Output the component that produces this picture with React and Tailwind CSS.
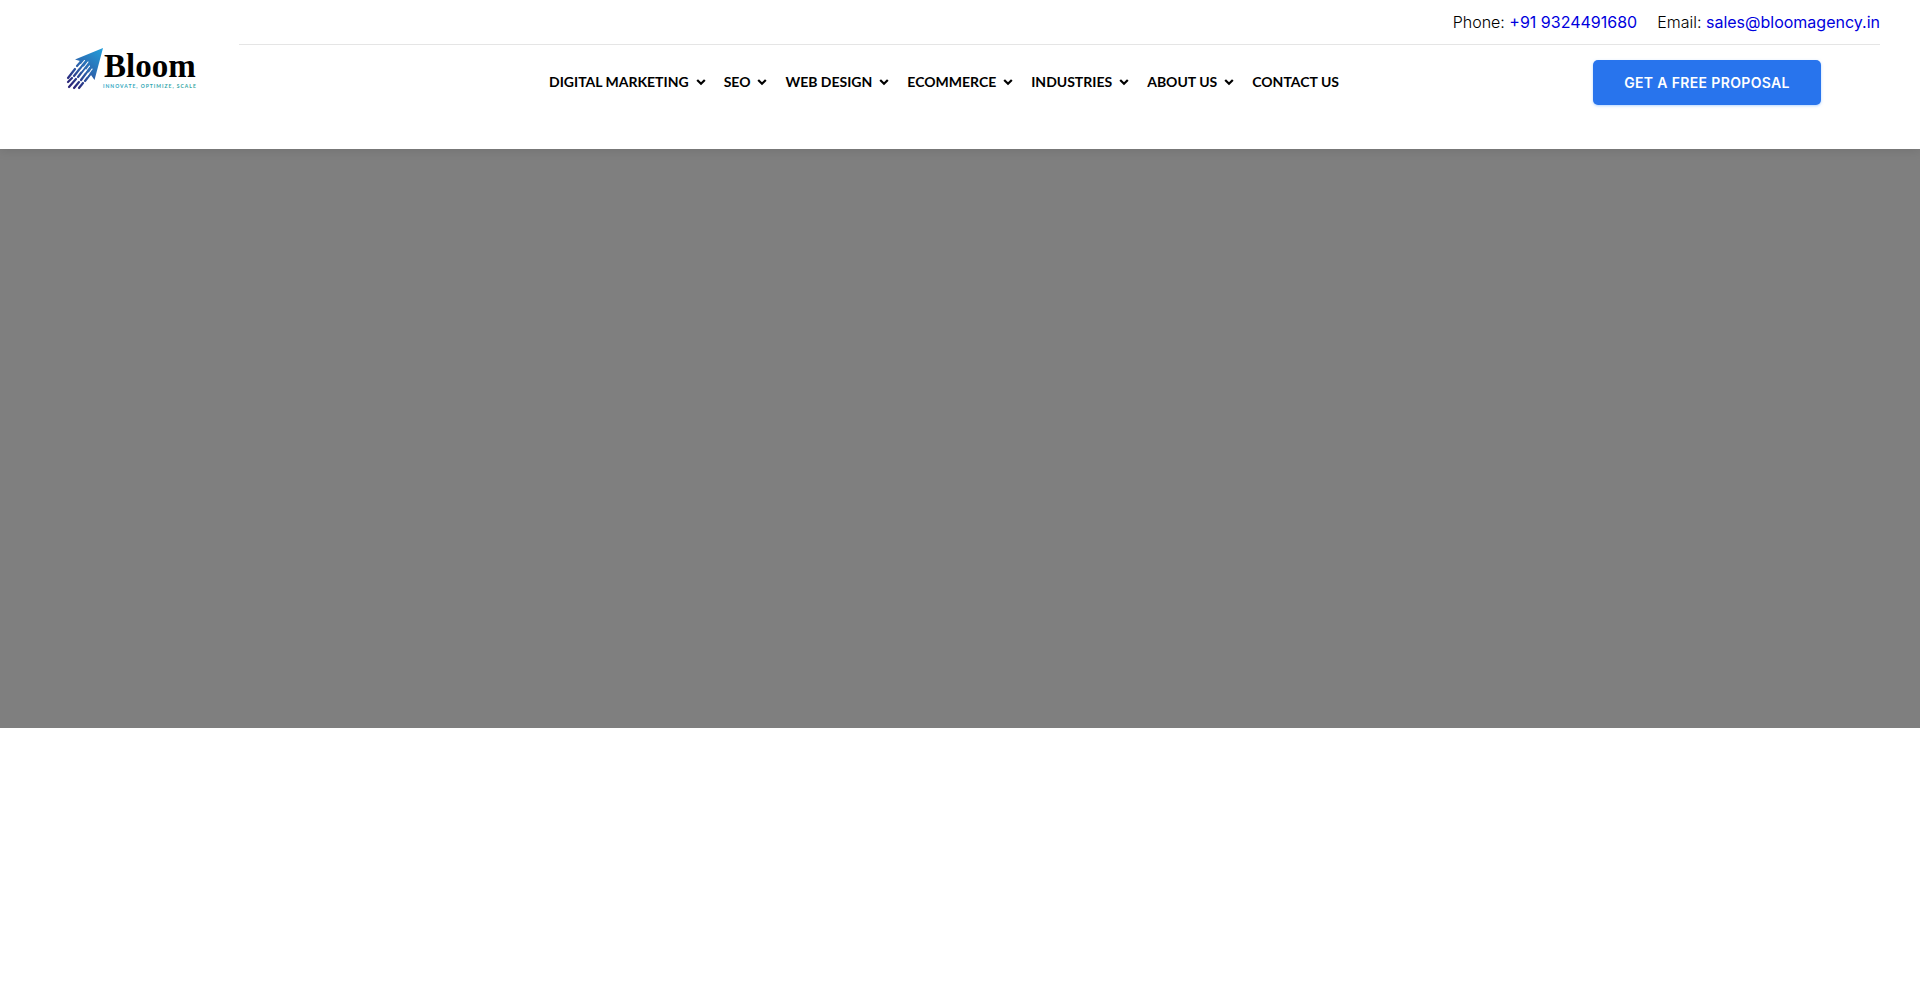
const menuItems = [
  { label: "Digital Marketing", hasMenu: true },
  { label: "SEO", hasMenu: true },
  { label: "Web Design", hasMenu: true },
  { label: "Ecommerce", hasMenu: true },
  { label: "Industries", hasMenu: true },
  { label: "About Us", hasMenu: true },
  { label: "Contact Us", hasMenu: false },
]

const Logo = () => (
  <svg className="w-40 h-[70px]" viewBox="0 0 160 70" role="img" aria-label="Bloom">
    <defs>
      <linearGradient id="arrow" gradientUnits="userSpaceOnUse" x1="50" y1="14" x2="22" y2="50">
        <stop offset="0" stopColor="#229bd8" />
        <stop offset="0.5" stopColor="#2b6cb3" />
        <stop offset="1" stopColor="#2a2478" />
      </linearGradient>
      <linearGradient id="tagline" x1="0" y1="0" x2="1" y2="0">
        <stop offset="0" stopColor="#2aa5c4" />
        <stop offset="1" stopColor="#2fa39a" />
      </linearGradient>
    </defs>
    <path d="M53 13 L44.5 45 L41 40 L38 37 L33 31 L29 28 L30 26 L25 24.5 Z" fill="url(#arrow)" />
    {/* speed trails */}
    <g stroke="url(#arrow)" strokeWidth="2.2" strokeLinecap="round" fill="none">
      <path d="M34 23 L27 31" />
      <path d="M25 34 L18 43" />
      <path d="M36 26 L24 41" />
      <path d="M22 43 L18 47" />
      <path d="M38 29 L28 42" />
      <path d="M26 44 L19 52" />
      <path d="M40 33 L31 45" />
      <path d="M29 47 L24 53" />
      <path d="M42 37 L35 46" />
      <path d="M33 48 L29 53" />
    </g>
    <g stroke="#fff" strokeWidth="1.1" strokeLinecap="round" fill="none">
      <path d="M34.5 25.5 L29 32" />
      <path d="M38 27 L31 36" />
      <path d="M39.5 31 L35 37" />
      <path d="M42 34 L37 41" />
    </g>
    <text x="54" y="42" fontSize="33" fontWeight="700" fontFamily="Liberation Serif, serif" fill="#000">
      Bloom
    </text>
    <text x="53" y="53" fontSize="5" letterSpacing="1" fontWeight="700" fontFamily="Lato, sans-serif" fill="url(#tagline)">
      INNOVATE, OPTIMIZE, SCALE
    </text>
  </svg>
)

const Chevron = () => (
  <svg className="size-[10px]" viewBox="0 0 10 10" fill="none" stroke="currentColor" strokeWidth="2.2" aria-hidden="true">
    <path d="M1.2 3 L5 6.8 L8.8 3" />
  </svg>
)

const Header = () => {
  return (
    <header className="relative flex bg-white pr-10 pb-11 shadow-[0_2px_10px_rgba(0,0,0,0.1)]">
      <a href="#" className="ml-[50px] mr-[29px] mt-[35px] shrink-0">
        <Logo />
      </a>
      <div className="flex-1">
        <div className="flex h-[45px] items-center justify-end gap-5 border-b border-[#e5e5e5] font-light text-black">
          <p>
            Phone:{" "}
            <a href="tel:+919324491680" className="font-normal text-[#0000dd]">
              +91 9324491680
            </a>
          </p>
          <p>
            Email:{" "}
            <a href="mailto:sales@bloomagency.in" className="font-normal text-[#0000dd]">
              sales@bloomagency.in
            </a>
          </p>
        </div>
        <div className="flex items-center pr-[59px] pt-[15px]">
          <nav className="flex-1 pb-0.5 pl-14">
            <ul className="flex justify-center gap-[18px]">
              {menuItems.map((item) => (
                <li key={item.label}>
                  <a href="#" className="flex items-center gap-[7px] whitespace-nowrap font-['Lato',sans-serif] text-sm font-bold uppercase text-black">
                    {item.label}
                    {item.hasMenu && <Chevron />}
                  </a>
                </li>
              ))}
            </ul>
          </nav>
          <button
            type="button"
            className="h-[45px] w-[228px] rounded-[5px] bg-[#2874ed] text-sm font-semibold uppercase tracking-wide text-white shadow-sm shadow-blue-200"
          >
            Get a free proposal
          </button>
        </div>
      </div>
    </header>
  )
}

const App = () => {
  return (
    <div className="min-h-screen bg-white font-['Inter',sans-serif]">
      <Header />
      <section className="h-[579px] bg-[#7f7f7f]"></section>
    </div>
  )
}

export default App
